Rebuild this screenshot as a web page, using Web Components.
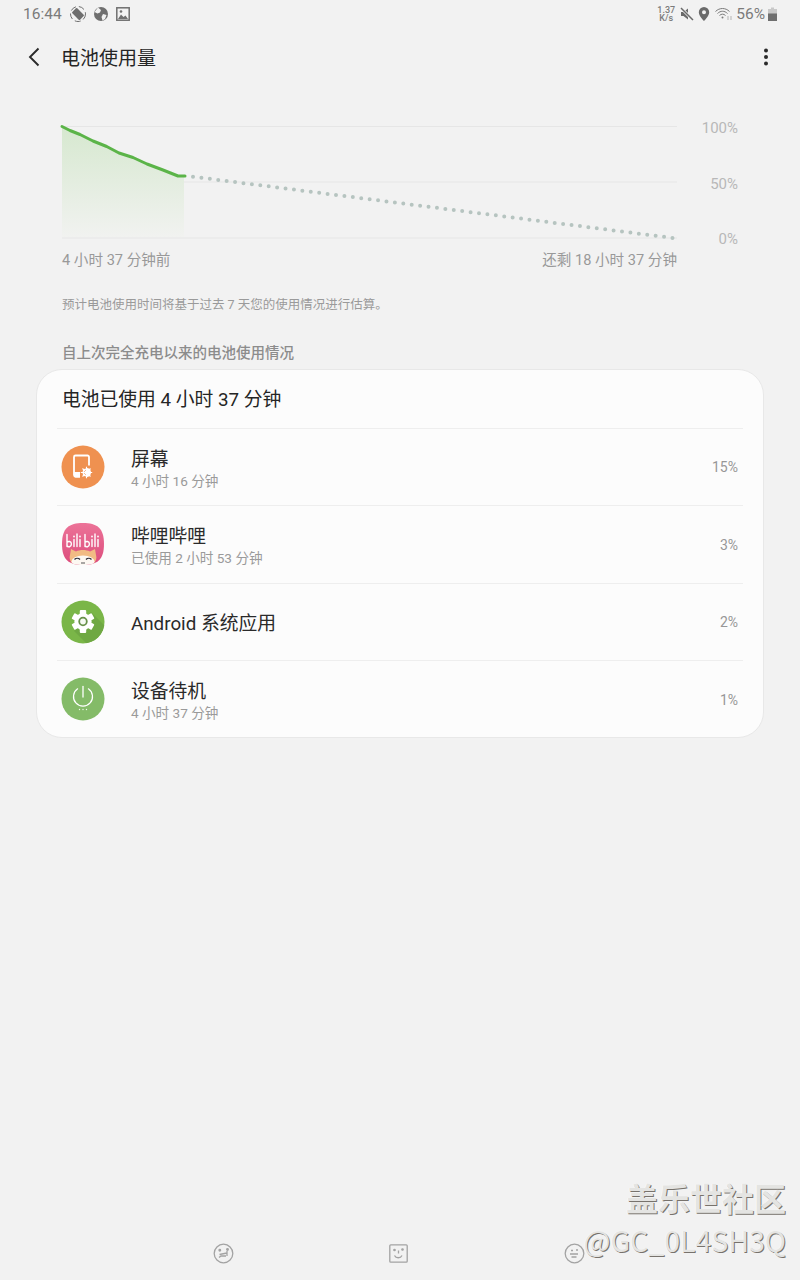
<!DOCTYPE html>
<html lang="zh-CN">
<head>
<meta charset="utf-8">
<title>电池使用量</title>
<style>
  html, body { margin: 0; height: 100%; background: #f2f2f2; }
  body { font-family: Roboto, "Noto Sans CJK SC", sans-serif; }
</style>
</head>
<body>
<battery-page>
  <status-bar></status-bar>
  <app-bar>电池使用量</app-bar>
  <battery-chart></battery-chart>
  <water-mark></water-mark>
  <p slot="note">预计电池使用时间将基于过去 7 天您的使用情况进行估算。</p>
  <h2 slot="heading">自上次完全充电以来的电池使用情况</h2>
  <usage-card slot="cards" heading="电池已使用 4 小时 37 分钟">
    <usage-row name="屏幕" detail="4 小时 16 分钟" percent="15%" icon="screen"></usage-row>
    <usage-row name="哔哩哔哩" detail="已使用 2 小时 53 分钟" percent="3%" icon="bili"></usage-row>
    <usage-row name="Android 系统应用" percent="2%" icon="gear"></usage-row>
    <usage-row name="设备待机" detail="4 小时 37 分钟" percent="1%" icon="power"></usage-row>
  </usage-card>
  <bottom-nav slot="footer"></bottom-nav>
</battery-page>

<script>
// ── Ícones ──
const ICONS = {
  screen: `<svg viewBox="0 0 44 44" width="44" height="44">
    <circle cx="22" cy="22" r="21.5" fill="#ef9150"/>
    <path d="M19 31.500h-4.500a1.500 1.500 0 0 1-1.500-1.500V12a1.500 1.500 0 0 1 1.500-1.500h12a1.500 1.500 0 0 1 1.500 1.500v8.500" fill="none" stroke="#fff" stroke-width="1.800"/>
    <path d="M13 27h6v5.500h-4.500a1.500 1.500 0 0 1-1.500-1.500z" fill="#fff"/>
    <path d="M25.500 23v9a4.500 4.500 0 0 0 0-9z" fill="#fff"/>
    <circle cx="25.500" cy="27.500" r="3.300" fill="none" stroke="#fff" stroke-width="1.300"/>
    <path d="M25.500 21.800v11.400M19.800 27.500h11.400M21.500 23.500l8 8M29.500 23.500l-8 8" stroke="#fff" stroke-width="1.100"/>
  </svg>`,
  bili: `<svg viewBox="0 0 44 44" width="44" height="44">
    <defs>
      <linearGradient id="bili" x1="0" y1="0" x2="0" y2="1">
        <stop offset="0" stop-color="#ec7398"/><stop offset="1" stop-color="#dc4c7c"/>
      </linearGradient>
      <clipPath id="squircle"><path d="M22 1C36 1 43 6 43 22C43 38 36 43 22 43C8 43 1 38 1 22C1 6 8 1 22 1Z"/></clipPath>
    </defs>
    <path d="M22 1C36 1 43 6 43 22C43 38 36 43 22 43C8 43 1 38 1 22C1 6 8 1 22 1Z" fill="url(#bili)"/>
    <g fill="none" stroke="#fff" stroke-width="1.400" stroke-linecap="round">
      <path d="M6 12.500v12M6 20.500c1-1.600 4.400-1.600 4.400 1.600s-3.400 3.400-4.400 1.600M13 17.500v7M16 12v12.500M19 17.500v7"/>
      <path d="M24 12.500v12M24 20.500c1-1.600 4.400-1.600 4.400 1.600s-3.400 3.400-4.400 1.600M31 17.500v7M34 12v12.500M37 17.500v7"/>
    </g>
    <g fill="#fff"><circle cx="13" cy="14.500" r=".9"/><circle cx="19" cy="14.500" r=".9"/><circle cx="31" cy="14.500" r=".9"/><circle cx="37" cy="14.500" r=".9"/></g>
    <g clip-path="url(#squircle)">
      <path d="M9 33l1-6 5 2.500c4-2 10-2 14 0l5-2.500 1 6c1 3 0 6-2 8H11c-2-2-3-5-2-8z" fill="#f2bb84"/>
      <ellipse cx="22" cy="39.500" rx="11.500" ry="6" fill="#fdf8f2"/>
      <path d="M13.500 37.500c1.500-1.500 4-1.500 5.500 0M25 37.500c1.500-1.500 4-1.500 5.500 0" stroke="#2e2e3a" stroke-width="1.400" fill="none"/>
      <path d="M20 41h4" stroke="#555" stroke-width="1"/>
    </g>
  </svg>`,
  gear: `<svg viewBox="0 0 44 44" width="44" height="44">
    <defs><clipPath id="disc"><circle cx="22" cy="22" r="21.500"/></clipPath></defs>
    <circle cx="22" cy="22" r="21.500" fill="#7ab648"/>
    <path d="M30 12L48 30V48H30L13 31z" fill="#6fa843" clip-path="url(#disc)"/>
    <g fill="#fff" transform="translate(22 21.500)">
      <circle r="8.600"/>
      <rect x="-3.200" y="-11.500" width="6.400" height="23" rx="1"/>
      <rect x="-3.200" y="-11.500" width="6.400" height="23" rx="1" transform="rotate(60)"/>
      <rect x="-3.200" y="-11.500" width="6.400" height="23" rx="1" transform="rotate(120)"/>
    </g>
    <circle cx="22" cy="21.500" r="3.800" fill="#f6faf3" stroke="#68914a" stroke-width="1.800"/>
  </svg>`,
  power: `<svg viewBox="0 0 44 44" width="44" height="44">
    <circle cx="22" cy="22" r="21.500" fill="#84bb68"/>
    <path d="M16.600 11.800A9.500 9.500 0 1 0 27.400 11.800" fill="none" stroke="#fff" stroke-width="1.200" stroke-linecap="round"/>
    <path d="M22 9.500v10.500" stroke="#fff" stroke-width="1.300" stroke-linecap="round"/>
    <g fill="#eef6ea"><circle cx="18.500" cy="32.500" r=".7"/><circle cx="22" cy="32.500" r=".7"/><circle cx="25.500" cy="32.500" r=".7"/></g>
  </svg>`,
};

// ── Layout da página ──
class BatteryPage extends HTMLElement {
  constructor() {
    super();
    this.attachShadow({ mode: 'open' }).innerHTML = `
      <style>
        :host { display: flex; flex-direction: column; height: 100vh; position: relative; overflow: hidden; background: #f2f2f2; color: #252525; }
        ::slotted(p) { margin: 27px 0 0 62px; font-size: 12.500px; line-height: 18px; color: #9a9a9a; height: 18px; }
        ::slotted(h2) { margin: 31px 0 0 62px; font-size: 14.500px; line-height: 18px; font-weight: 500; color: #8c8c8c; }
        ::slotted([slot="footer"]) { margin-top: auto; }
      </style>
      <slot></slot>
      <slot name="note"></slot>
      <slot name="heading"></slot>
      <slot name="cards"></slot>
      <slot name="footer"></slot>
    `;
  }
}

// ── Barra de estado ──
class StatusBar extends HTMLElement {
  constructor() {
    super();
    this.attachShadow({ mode: 'open' }).innerHTML = `
      <style>
        :host { display: flex; align-items: center; height: 28px; padding: 0 23px; color: #7b7b7b; font-size: 15.500px; }
        .left, .right { display: flex; align-items: center; }
        .left { gap: 7px; }
        .left span { margin-right: 1px; }
        .right { margin-left: auto; gap: 5px; }
        .rate { font-size: 9px; line-height: 8.500px; font-weight: 500; text-align: center; }
        svg { display: block; }
      </style>
      <div class="left">
        <span>16:44</span>
        <svg width="16" height="16" viewBox="0 0 16 16"><circle cx="8" cy="8" r="7.500" fill="none" stroke="#6f6f6f" stroke-width="1" stroke-dasharray="6 3"/><rect x="4.500" y="2.500" width="7" height="11" rx="1" fill="#6f6f6f" transform="rotate(-45 8 8)"/></svg>
        <svg width="16" height="16" viewBox="0 0 16 16"><circle cx="8" cy="8" r="7" fill="#6f6f6f"/><path d="M5 1.500l3 2.500-1 2.500-2.500 1L1.500 6zM10 8l3.500 1-1.500 4-2.500 1.500L8.500 11z" fill="#f2f2f2"/></svg>
        <svg width="14" height="14" viewBox="0 0 14 14"><rect x=".8" y=".8" width="12.400" height="12.400" fill="none" stroke="#6f6f6f" stroke-width="1.500"/><path d="M2 12l3-4.500 2.500 2.500 2-1.500 2.500 3.500z" fill="#6f6f6f"/><circle cx="5" cy="4.500" r="1.300" fill="#6f6f6f"/></svg>
      </div>
      <div class="right">
        <div class="rate">1.37<br>K/s</div>
        <svg width="14" height="14" viewBox="0 0 14 14" style="margin-right:-1px"><path d="M1 5h2.500L8 1.500v11L3.500 9H1z" fill="#6a6a6a"/><path d="M1 1l12 12" stroke="#f2f2f2" stroke-width="3"/><path d="M1 1l12 12" stroke="#6a6a6a" stroke-width="1.500"/></svg>
        <svg width="12" height="14" viewBox="0 0 12 14"><path fill-rule="evenodd" fill="#6a6a6a" d="M6 0a5.200 5.200 0 0 1 5.200 5.200C11.200 9 6 14 6 14S.8 9 .8 5.200A5.200 5.200 0 0 1 6 0zm0 3.200a2 2 0 1 0 0 4 2 2 0 0 0 0-4z"/></svg>
        <svg width="18" height="14" viewBox="0 0 18 14" fill="none" stroke="#7b7b7b" stroke-width="1"><path d="M.5 4.500c4-4 10-4 14 0M2.500 6.500c3-3 7-3 10 0M4.500 8.500c1.800-1.800 4.200-1.800 6 0"/><circle cx="7.500" cy="10.500" r="1" fill="#7b7b7b" stroke="none"/><path d="M13 9v4M16 9v4" stroke="#b5b5b5"/></svg>
        <span style="margin-left:-2px">56%</span>
        <svg width="9" height="14" viewBox="0 0 9 14" style="margin-left:-2px"><path d="M3 .5h3v1.500h3V14H0V2h3z" fill="#c9c9c9"/><rect y="6.500" width="9" height="7.500" fill="#6f6f6f"/></svg>
      </div>
    `;
  }
}

// ── Barra superior ──
class AppBar extends HTMLElement {
  constructor() {
    super();
    this.attachShadow({ mode: 'open' }).innerHTML = `
      <style>
        :host { display: flex; align-items: center; height: 58px; padding: 0 32px 0 28px; font-size: 19px; color: #252525; }
        .title { flex: 1; padding-bottom: 2px; margin-left: 21px; }
        svg { display: block; }
      </style>
      <svg width="12" height="20" viewBox="0 0 12 20"><path d="M10.500 1.500L2 10l8.500 8.500" fill="none" stroke="#2a2a2a" stroke-width="1.900"/></svg>
      <div class="title"><slot></slot></div>
      <svg width="4" height="18" viewBox="0 0 4 18" fill="#2a2a2a"><circle cx="2" cy="2.500" r="2"/><circle cx="2" cy="9" r="2"/><circle cx="2" cy="15.500" r="2"/></svg>
    `;
  }
}

// ── Gráfico de bateria ──
class BatteryChart extends HTMLElement {
  constructor() {
    super();
    this.attachShadow({ mode: 'open' }).innerHTML = `
      <style>
        :host { display: grid; grid-template-columns: 615px 61px; margin: 40px 0 0 62px; color: #a0a0a0; }
        svg { display: block; overflow: visible; }
        .axis { display: flex; flex-direction: column; justify-content: space-between; align-items: flex-end; height: 127px; margin: -6px 0 -8px; color: #b8b8b8; font-size: 15px; line-height: 16px; }
        .times { display: flex; justify-content: space-between; margin-top: 12px; font-size: 14.600px; line-height: 18px; color: #999; }
      </style>
      <svg width="615" height="113" viewBox="0 0 615 113">
        <defs>
          <linearGradient id="fill" x1="0" y1="0" x2="0" y2="1">
            <stop offset="0" stop-color="#d6e8cf"/><stop offset="1" stop-color="#f1f2f0"/>
          </linearGradient>
        </defs>
        <path d="M0 .5H615M0 56H615M0 112H615" stroke="#e6e6e6" stroke-width="1" fill="none"/>
        <path d="M0 .5L8 4.500L18 8.500L31 15L44.700 20.500L57 27L71 31.500L85 38L101 44L116 50L122 50L122 111H0Z" fill="url(#fill)"/>
        <path d="M0 .5L8 4.500L18 8.500L31 15L44.700 20.500L57 27L71 31.500L85 38L101 44L116 50L123 50" fill="none" stroke="#5bb448" stroke-width="3" stroke-linecap="round" stroke-linejoin="round"/>
        <path d="M131 50.700L615 112.500" fill="none" stroke="#b6c4c0" stroke-width="4" stroke-linecap="round" stroke-dasharray="0 8.480"/>
      </svg>
      <div class="axis"><span>100%</span><span>50%</span><span>0%</span></div>
      <div class="times"><span>4 小时 37 分钟前</span><span>还剩 18 小时 37 分钟</span></div>
    `;
  }
}

// ── Cartão com as linhas ──
class UsageCard extends HTMLElement {
  constructor() {
    super();
    this.attachShadow({ mode: 'open' }).innerHTML = `
      <style>
        :host { display: block; margin: 6px 36px 0; background: #fcfcfc; border: 1px solid #e8e8e8; border-radius: 26px; box-sizing: border-box; height: 369px; }
        .head { height: 57.500px; box-sizing: border-box; padding: 0 0 2px 25px; display: flex; align-items: center; font-size: 18.800px; color: #252525; }
      </style>
      <div class="head"></div>
      <slot></slot>
    `;
  }
  connectedCallback() {
    this.shadowRoot.querySelector('.head').textContent = this.getAttribute('heading');
  }
}

class UsageRow extends HTMLElement {
  constructor() {
    super();
    this.attachShadow({ mode: 'open' }).innerHTML = `
      <style>
        :host { display: flex; align-items: center; height: 77.500px; margin: 0 20px; border-top: 1px solid #eeeeee; box-sizing: border-box; padding-right: 5px; }
        .icon { width: 44px; height: 44px; margin-left: 4px; flex: none; }
        svg { display: block; }
        .text { margin-left: 26px; flex: 1; padding-top: 4px; }
        .name { font-size: 18.800px; line-height: 24px; color: #2a2a2a; }
        .detail { font-size: 13.600px; line-height: 18px; color: #9a9a9a; }
        .pct { font-size: 14px; color: #979797; padding-top: 1px; }
      </style>
      <div class="icon"></div>
      <div class="text"><div class="name"></div><div class="detail"></div></div>
      <div class="pct"></div>
    `;
  }
  connectedCallback() {
    const root = this.shadowRoot;
    root.querySelector('.icon').innerHTML = ICONS[this.getAttribute('icon')] ?? '';
    root.querySelector('.name').textContent = this.getAttribute('name');
    root.querySelector('.pct').textContent = this.getAttribute('percent');
    const detail = this.getAttribute('detail');
    if (detail) root.querySelector('.detail').textContent = detail;
    else root.querySelector('.detail').remove();
  }
}

// ── Navegação inferior (gestos) ──
class BottomNav extends HTMLElement {
  constructor() {
    super();
    this.attachShadow({ mode: 'open' }).innerHTML = `
      <style>
        :host { display: grid; grid-template-columns: 176px 175px 20px; justify-content: start; align-items: center; height: 54px; padding: 0 0 0 213px; box-sizing: border-box; }
        svg { display: block; }
      </style>
      <svg width="21" height="21" viewBox="0 0 21 21" fill="none" stroke="#a3a3a3" stroke-width="1.300"><circle cx="10.500" cy="10.500" r="9.300"/><path d="M6 14.500l2-1.500h5M6.500 11.500l7.500-1.500M14 8v5"/><circle cx="6.800" cy="7.200" r=".8" fill="#a3a3a3"/><circle cx="14.500" cy="6.500" r=".8" fill="#a3a3a3"/></svg>
      <svg width="19" height="19" viewBox="0 0 19 19" fill="none" stroke="#a3a3a3" stroke-width="1.300"><rect x=".8" y=".8" width="17.400" height="17.400" rx="1"/><path d="M5.500 11.500c1.500 3 6 3 7.500 0"/><path d="M9.500 6.500v3"/><circle cx="5.500" cy="6" r=".7" fill="#a3a3a3"/><circle cx="13.500" cy="5.500" r=".7" fill="#a3a3a3"/></svg>
      <svg width="21" height="21" viewBox="0 0 21 21" fill="none" stroke="#a3a3a3" stroke-width="1.300"><circle cx="10.500" cy="10.500" r="9.300"/><path d="M6 11h8M7.500 14h5M7 7.500h2M12 7h2"/></svg>
    `;
  }
}

// ── Marca de água ──
class WaterMark extends HTMLElement {
  constructor() {
    super();
    this.attachShadow({ mode: 'open' }).innerHTML = `
      <style>
        :host { display: flex; flex-direction: column; align-items: flex-end; position: absolute; right: 14px; bottom: 20px; color: #e4e4e2; text-shadow: 1px 1px 0 #77726c, -0.500px -0.500px 0 #fff; font-family: "Noto Sans CJK SC", sans-serif; }
        .brand { font-size: 32px; line-height: 42px; font-weight: 700; }
        .user { font-size: 28.500px; line-height: 40px; margin-top: 2px; }
      </style>
      <div class="brand">盖乐世社区</div>
      <div class="user">@GC_0L4SH3Q</div>
    `;
  }
}

customElements.define('usage-row', UsageRow);
customElements.define('usage-card', UsageCard);
customElements.define('status-bar', StatusBar);
customElements.define('app-bar', AppBar);
customElements.define('battery-chart', BatteryChart);
customElements.define('bottom-nav', BottomNav);
customElements.define('water-mark', WaterMark);
customElements.define('battery-page', BatteryPage);
</script>
</body>
</html>
